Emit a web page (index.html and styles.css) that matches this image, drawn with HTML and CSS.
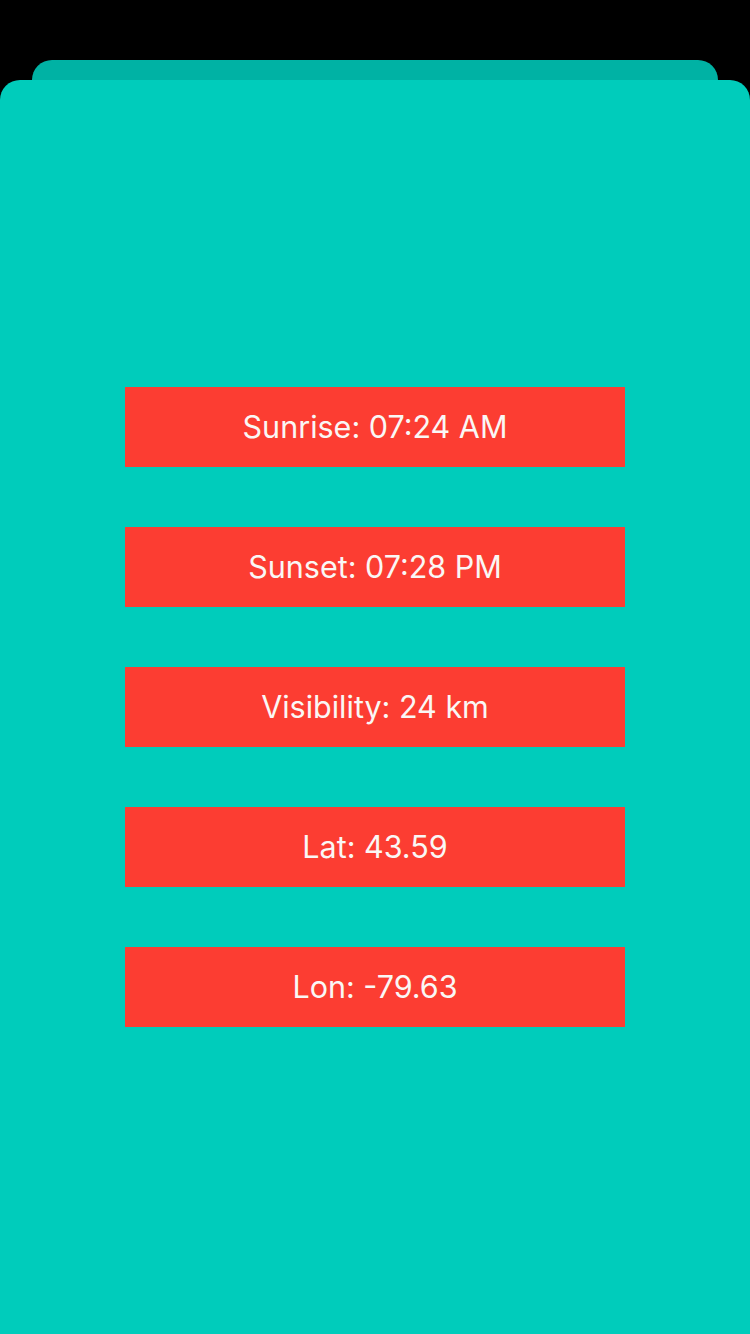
FILE: index.html
```html
<!DOCTYPE html>
<html>
<head>
<meta charset="utf-8">
<link rel="stylesheet" href="styles.css">
</head>
<body>
<div class="back-card"></div>
<div class="card">
  <div class="list">
    <div class="item">Sunrise: 07:24 AM</div>
    <div class="item">Sunset: 07:28 PM</div>
    <div class="item">Visibility: 24 km</div>
    <div class="item">Lat: 43.59</div>
    <div class="item">Lon: -79.63</div>
  </div>
</div>
</body>
</html>
```
FILE: styles.css
```css
html, body {
  margin: 0;
  padding: 0;
  background: #000;
  height: 1334px;
  overflow: hidden;
}
body {
  display: flex;
  flex-direction: column;
  padding-top: 60px;
  box-sizing: border-box;
  font-family: "Inter", "Roboto", "Liberation Sans", sans-serif;
}
.back-card {
  height: 20px;
  margin: 0 32px;
  background: #00B2A4;
  border-radius: 20px 20px 0 0;
}
.card {
  flex: 1;
  background: #00CCBB;
  border-radius: 20px 20px 0 0;
}
.list {
  display: flex;
  flex-direction: column;
  align-items: center;
  gap: 60px;
  padding-top: 307px;
}
.item {
  width: 500px;
  height: 80px;
  box-sizing: border-box;
  padding-bottom: 2px;
  background: #FC3D32;
  color: #FAF7F5;
  font-size: 30.5px;
  display: flex;
  align-items: center;
  justify-content: center;
}
```
